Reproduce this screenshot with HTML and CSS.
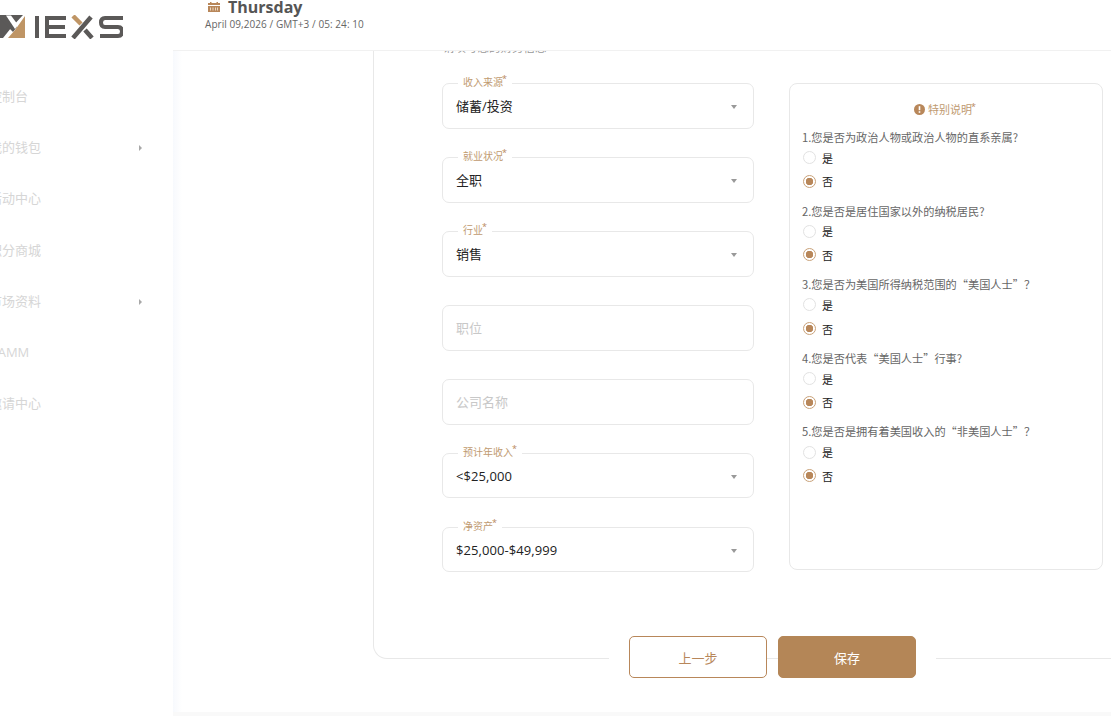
FILE: index.html
```html
<!DOCTYPE html>
<html lang="zh">
<head>
<meta charset="utf-8">
<title>IEXS</title>
<link rel="stylesheet" href="styles.css">
</head>
<body>
<aside class="sidebar">
  <svg class="logo" width="123" height="24" viewBox="0 15 123 24" role="img" aria-label="IEXS">
    <polygon fill="#5b5958" points="-4,15 23,15 11,28 3,38 -4,38"/>
    <polygon fill="#5b5958" points="-4,15 7,15 17,27 13,32"/>
    <polygon fill="#bf9565" points="25,16 25,38 8,38 15,30"/>
    <polygon fill="#fff" points="6,15.500 11,15.500 18,25 15,29"/>
    <rect fill="#5b5958" x="35" y="16" width="4" height="22"/>
    <path fill="none" stroke="#5b5958" stroke-width="4" d="M66 18H47V36H66M49 27H65"/>
    <path fill="none" stroke="#bf9565" stroke-width="4.500" d="M73 16L81 24"/>
    <path fill="none" stroke="#5b5958" stroke-width="4.500" d="M73 38L91 17M85 30L92 38"/>
    <path fill="none" stroke="#5b5958" stroke-width="4" d="M123 18H105Q101 18 101 22.500Q101 27 105 27H118Q122 27 122 31.500Q122 36 118 36H100"/>
  </svg>
  <nav class="nav">
    <a class="nav-item">控制台</a>
    <a class="nav-item has-sub">我的钱包</a>
    <a class="nav-item">活动中心</a>
    <a class="nav-item">积分商城</a>
    <a class="nav-item has-sub">市场资料</a>
    <a class="nav-item nav-latin">MAMM</a>
    <a class="nav-item">邀请中心</a>
  </nav>
</aside>
<main class="main">
  <header class="topbar">
    <div class="day-row">
      <svg class="cal" width="12" height="10" viewBox="0 0 12 10"><path fill="#b8875a" d="M0 1H2V0H3.500V1H8.500V0H10V1H12V3H0ZM0 4H12V10H0Z"/><path fill="#e9d8c4" d="M2 5.500H3V8.500H2ZM4.500 5.500H5.500V8.500H4.500ZM7 5.500H8V8.500H7ZM9 5.500H10V8.500H9Z"/></svg>
      <span class="day">Thursday</span>
    </div>
    <div class="date">April 09,2026 / GMT+3 / 05: 24: 10</div>
  </header>
  <section class="content">
    <div class="panel">
      <div class="cut-line"><span>请填写您的财务信息</span></div>
      <div class="columns">
        <div class="fields">
          <div class="field"><span class="field-label">收入来源<sup>*</sup></span><span class="value">储蓄/投资</span><i class="caret"></i></div>
          <div class="field"><span class="field-label">就业状况<sup>*</sup></span><span class="value">全职</span><i class="caret"></i></div>
          <div class="field"><span class="field-label">行业<sup>*</sup></span><span class="value">销售</span><i class="caret"></i></div>
          <div class="field"><span class="placeholder">职位</span></div>
          <div class="field"><span class="placeholder">公司名称</span></div>
          <div class="field field-short"><span class="field-label">预计年收入<sup>*</sup></span><span class="value">&lt;$25,000</span><i class="caret"></i></div>
          <div class="field field-short"><span class="field-label">净资产<sup>*</sup></span><span class="value">$25,000-$49,999</span><i class="caret"></i></div>
        </div>
        <div class="notes">
          <div class="notes-title">
            <svg width="11" height="11" viewBox="0 0 11 11"><circle cx="5.500" cy="5.500" r="5.500" fill="#b8875a"/><rect x="4.700" y="2.200" width="1.600" height="4" fill="#fff"/><rect x="4.700" y="7.200" width="1.600" height="1.600" fill="#fff"/></svg>
            <span>特别说明<sup>*</sup></span>
          </div>
          <div class="question">
            <p class="q-text">1.您是否为政治人物或政治人物的直系亲属?</p>
            <div class="radio"><i class="dot"></i>是</div>
            <div class="radio on"><i class="dot"></i>否</div>
          </div>
          <div class="question">
            <p class="q-text">2.您是否是居住国家以外的纳税居民?</p>
            <div class="radio"><i class="dot"></i>是</div>
            <div class="radio on"><i class="dot"></i>否</div>
          </div>
          <div class="question">
            <p class="q-text">3.您是否为美国所得纳税范围的“美国人士”？</p>
            <div class="radio"><i class="dot"></i>是</div>
            <div class="radio on"><i class="dot"></i>否</div>
          </div>
          <div class="question">
            <p class="q-text">4.您是否代表“美国人士”行事?</p>
            <div class="radio"><i class="dot"></i>是</div>
            <div class="radio on"><i class="dot"></i>否</div>
          </div>
          <div class="question">
            <p class="q-text">5.您是否是拥有着美国收入的“非美国人士”？</p>
            <div class="radio"><i class="dot"></i>是</div>
            <div class="radio on"><i class="dot"></i>否</div>
          </div>
        </div>
      </div>
      <div class="actions">
        <button class="btn btn-ghost">上一步</button>
        <button class="btn btn-solid">保存</button>
      </div>
    </div>
  </section>
  <div class="bottom-strip"></div>
</main>
</body>
</html>
```

FILE: styles.css
```css
* { box-sizing: border-box; }
html, body { margin: 0; height: 100%; }
body {
  display: flex;
  overflow: hidden;
  background: #fff;
  font-family: "Open Sans", "Noto Sans CJK SC", sans-serif;
  font-size: 13px;
  color: #333;
}
sup { margin-left: -1px; font-size: 9px; line-height: 0; vertical-align: 4px; color: #b8875a; }

.sidebar { width: 173px; flex: none; background: #fff; overflow: hidden; }
.logo { display: block; margin: 15px 0 0 0; overflow: hidden; }
.nav { display: flex; flex-direction: column; margin: 32px 0 0 -11px; }
.nav-item {
  position: relative;
  height: 51.2px;
  line-height: 51px;
  color: #d6d6d6;
  font-size: 13px;
}
.nav-latin { margin-left: -3px; }
.has-sub::after {
  content: "";
  position: absolute;
  left: 150px;
  top: 23px;
  border-left: 3px solid #a8a8a8;
  border-top: 3px solid transparent;
  border-bottom: 3px solid transparent;
}

.main { flex: 1; min-width: 0; display: flex; flex-direction: column; }
.topbar {
  height: 51px;
  flex: none;
  padding-left: 32px;
  border-bottom: 1px solid #f1f1f1;
  background: #fff;
}
.day-row { display: flex; align-items: center; height: 15px; margin-top: 0; padding-left: 3px; }
.cal { margin-top: -1px; }
.day { margin-left: 8px; font-size: 16px; font-weight: 700; color: #555; line-height: 15px; }
.date { margin-top: 2px; font-size: 10px; line-height: 14px; color: #666; letter-spacing: .06px; }

.content {
  flex: 1;
  padding-left: 200px;
  background: linear-gradient(to right, #f7f9fd, #fff 9px) no-repeat 0 0 / 9px 100%;
  margin-left: 0;
  display: flex;
  flex-direction: column;
}
.panel {
  position: relative;
  height: 608px;
  border-left: 1px solid #e8e8e8;
  border-bottom: 1px solid #e8e8e8;
  border-bottom-left-radius: 14px;
}
.cut-line { height: 3px; overflow: hidden; margin-left: 69px; }
.cut-line span { display: block; margin-top: -10px; font-size: 11.500px; line-height: 13px; color: #999; }
.columns { display: flex; gap: 35px; margin: 29px 0 0 68px; }

.fields { width: 312px; flex: none; display: flex; flex-direction: column; gap: 28px; }
.field {
  position: relative;
  height: 46px;
  display: flex;
  align-items: center;
  padding: 0 13px 1px;
  border: 1px solid #e8e8e8;
  border-radius: 7px;
  background: #fff;
}
.field-short { height: 45px; margin-bottom: 1px; padding-bottom: 0; }
.field-label {
  position: absolute;
  left: 15px;
  top: -8px;
  padding: 0 5px;
  background: #fff;
  font-size: 10px;
  line-height: 13px;
  color: #c09a70;
}
.value { color: #222; font-size: 13px; }
.field-short .value { letter-spacing: .07px; }
.placeholder { color: #c8c8c8; font-size: 13px; }
.caret {
  position: absolute;
  right: 16px;
  top: 21px;
  border-top: 4px solid #999;
  border-left: 3px solid transparent;
  border-right: 3px solid transparent;
}

.notes {
  width: 314px;
  flex: none;
  height: 487px;
  padding: 17px 12px 0;
  border: 1px solid #e8e8e8;
  border-radius: 8px;
}
.notes-title {
  display: flex;
  align-items: center;
  justify-content: center;
  gap: 3px;
  height: 16px;
  margin-bottom: 13px;
  padding-right: 2px;
  font-size: 11px;
  color: #c09a70;
}
.question { margin-bottom: 10.400px; }
.q-text {
  margin: 0;
  height: 16px;
  line-height: 14px;
  font-family: "Noto Sans CJK SC", sans-serif;
  font-size: 11.200px;
  color: #666;
  white-space: nowrap;
}
.radio { display: flex; align-items: center; gap: 6px; height: 23.600px; padding-left: 1px; font-size: 11px; color: #222; }
.dot { width: 13px; height: 13px; flex: none; border: 1px solid #e2e2e2; border-radius: 50%; background: #fff; }
.radio.on .dot { border-color: #c9a27a; background: radial-gradient(circle, #b8875a 0 3.500px, #fff 4px); }

.actions {
  position: absolute;
  left: 235px;
  bottom: -20px;
  display: flex;
  align-items: center;
  gap: 11px;
}
.actions::before, .actions::after { content: ""; width: 20px; height: 5px; margin: 0 -11px 0 0; background: #fff; }
.actions::after { margin: 0 0 0 -11px; }
.btn {
  width: 138px;
  height: 42px;
  border-radius: 5px;
  font-family: inherit;
  font-size: 13px;
}
.btn-ghost { border: 1px solid #b8875a; background: #fff; color: #b8875a; }
.btn-solid { border: 1px solid #b48657; background: #b48657; color: #fff; }

.bottom-strip { height: 4px; margin-top: auto; background: #f9f9f9; flex: none; }
```
